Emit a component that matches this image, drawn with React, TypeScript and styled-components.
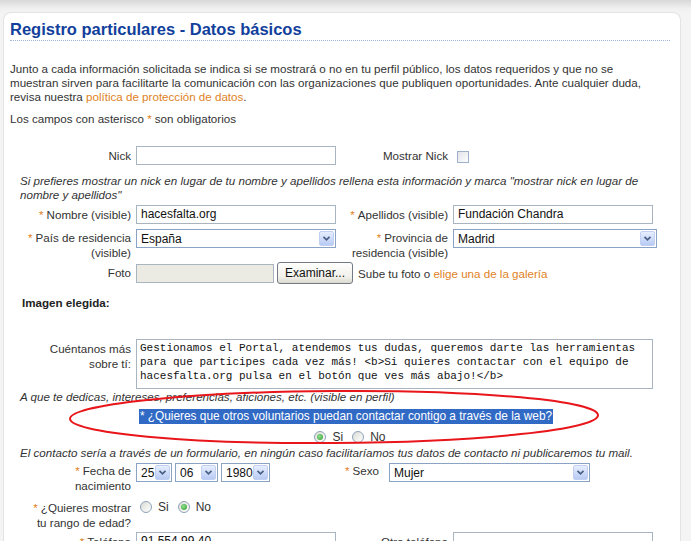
import React from "react";
import styled, { createGlobalStyle } from "styled-components";

const GlobalStyle = createGlobalStyle`
  html, body { margin: 0; padding: 0; }
  body {
    background: #f3f3f3;
    font-family: "Liberation Sans", Arial, sans-serif;
    font-size: 11.6px;
    color: #333;
  }
`;

const Page = styled.div`
  position: relative;
  width: 691px;
  height: 541px;
  overflow: hidden;
  box-sizing: border-box;
  padding: 12px 10px 0 3px;
  background: linear-gradient(#d8d8d8, #f1f1f1 9px, #f4f4f4 14px);
`;

const Card = styled.div`
  height: 100%;
  box-sizing: border-box;
  background: #fff;
  border: 1px solid #e3e3e3;
  border-bottom: none;
  border-radius: 8px 8px 0 0;
  padding: 6px 7px 0 6px;
`;

const Title = styled.h1`
  margin: 0 3px 0 0;
  font-size: 16.5px;
  line-height: 20px;
  font-weight: bold;
  color: #123f9c;
  padding-bottom: 1px;
  border-bottom: 1px dotted #9db5df;
`;

const Text = styled.p<{ $top: number; $indent?: number; $italic?: boolean }>`
  margin: ${(p) => p.$top}px 0 0 0;
  padding-left: ${(p) => p.$indent ?? 0}px;
  line-height: 14px;
  white-space: nowrap;
  font-style: ${(p) => (p.$italic ? "italic" : "normal")};
`;

const Link = styled.span`
  color: #e0821e;
`;

const Star = styled.span`
  color: #e0821e;
  margin-right: 3px;
`;

const Row = styled.div<{ $top: number }>`
  display: grid;
  grid-template-columns: 126px 200px 117px 200px;
  align-items: start;
  margin-top: ${(p) => p.$top}px;
`;

const DateRow = styled(Row)`
  grid-template-columns: 126px 200px 53px 201px;
`;

const Label = styled.div<{ $pad?: number }>`
  text-align: right;
  padding-right: 5px;
  padding-top: ${(p) => p.$pad ?? 2}px;
  line-height: 15px;
  color: #333;
`;

const SideLabel = styled.div`
  padding-left: 9px;
  line-height: 15px;
  white-space: nowrap;
`;

const Input = styled.div<{ $w?: number; $disabled?: boolean }>`
  width: ${(p) => p.$w ?? 200}px;
  height: 19px;
  box-sizing: border-box;
  border: 1px solid #a9b4c1;
  background: ${(p) => (p.$disabled ? "#ebebe4" : "#fff")};
  padding: 0 4px;
  font-size: 12px;
  line-height: 17px;
  color: #111;
`;

const Select = styled.div<{ $w: number }>`
  width: ${(p) => p.$w}px;
  height: 19px;
  box-sizing: border-box;
  border: 1px solid #8aa3c4;
  background: #fff;
  display: flex;
  align-items: center;
  padding-left: 4px;
  font-size: 12px;
  color: #111;
`;

const SelectValue = styled.span`
  flex: 1;
`;

const ArrowBtn = styled.span`
  width: 15px;
  height: 15px;
  margin-right: 1px;
  box-sizing: border-box;
  border: 1px solid #c1d0f2;
  border-radius: 2px;
  background: linear-gradient(#e6eefe, #b9cbf5);
  display: flex;
  align-items: center;
  justify-content: center;
`;

const Checkbox = styled.span`
  display: inline-block;
  width: 12px;
  height: 12px;
  box-sizing: border-box;
  margin: 5px 0 0 4px;
  border: 1px solid #9eb0c9;
  background: linear-gradient(135deg, #e2e4ea, #fdfdfd);
`;

const RadioDot = styled.span<{ $on?: boolean }>`
  display: inline-block;
  position: relative;
  width: 12px;
  height: 12px;
  box-sizing: border-box;
  border-radius: 50%;
  border: 1px solid #8da2b9;
  background: linear-gradient(135deg, #dcdcd5, #ffffff);
  &::after {
    content: "";
    display: ${(p) => (p.$on ? "block" : "none")};
    position: absolute;
    left: 2px;
    top: 2px;
    width: 6px;
    height: 6px;
    border-radius: 50%;
    background: radial-gradient(circle at 40% 40%, #8fe08f, #2c9a2c);
  }
`;

const RadioGroup = styled.div<{ $center?: boolean; $top?: number }>`
  display: flex;
  align-items: center;
  gap: 6px;
  justify-content: ${(p) => (p.$center ? "center" : "flex-start")};
  margin-top: ${(p) => p.$top ?? 0}px;
  padding: ${(p) => (p.$center ? "0 0 0 20px" : "0 0 0 4px")};
  line-height: 14px;
  font-size: 12px;
`;

const RadioText = styled.span`
  margin-right: 3px;
`;

const FileRow = styled.div`
  grid-column: 2 / 5;
  display: flex;
  align-items: center;
  gap: 3px;
`;

const Button = styled.span`
  width: 76px;
  height: 22px;
  margin-top: -1px;
  box-sizing: border-box;
  border: 1px solid #707b86;
  border-radius: 3px;
  background: linear-gradient(#ffffff, #f1f0ea 70%, #dcdad0);
  display: flex;
  align-items: center;
  justify-content: center;
  font-size: 12px;
  color: #111;
`;

const FileHint = styled.span`
  margin-left: 2px;
  white-space: nowrap;
`;

const Subhead = styled.div`
  margin-top: 12px;
  padding-left: 12px;
  font-weight: bold;
  line-height: 14px;
  color: #222;
`;

const TextArea = styled.div`
  grid-column: 2 / 5;
  width: 517px;
  height: 50px;
  box-sizing: border-box;
  border: 1px solid #a9b4c1;
  padding: 1px 3px;
  font-family: "Liberation Mono", "Courier New", monospace;
  font-size: 11px;
  line-height: 14px;
  color: #111;
  white-space: pre;
`;

const HighlightRow = styled.div`
  margin-top: 5px;
  display: flex;
  justify-content: center;
  padding-left: 9px;
  line-height: 15px;
  font-size: 11.85px;
`;

const Highlight = styled.span`
  background: #316ac5;
  color: #fff;
  padding: 0 1px;
`;

const DateGroup = styled.div`
  display: flex;
  gap: 3px;
`;

const Ring = styled.svg`
  position: absolute;
  left: 0;
  top: 0;
  pointer-events: none;
`;

const Chevron = () => (
  <svg width="9" height="7" viewBox="0 0 9 7">
    <path d="M1.5 1.8 L4.5 4.8 L7.5 1.8" fill="none" stroke="#4a5f86" strokeWidth="1.7" />
  </svg>
);

const Drop: React.FC<{ w: number; value: string }> = ({ w, value }) => (
  <Select $w={w}>
    <SelectValue>{value}</SelectValue>
    <ArrowBtn>
      <Chevron />
    </ArrowBtn>
  </Select>
);

export default function App() {
  return (
    <Page>
      <GlobalStyle />
      <Card>
        <Title>Registro particulares - Datos básicos</Title>
        <Text $top={21}>
          Junto a cada información solicitada se indica si se mostrará o no en tu perfil público, los datos requeridos y que no se
          <br />
          muestran sirven para facilitarte la comunicación con las organizaciones que publiquen oportunidades. Ante cualquier duda,
          <br />
          revisa nuestra <Link>política de protección de datos</Link>.
        </Text>
        <Text $top={8}>
          Los campos con asterisco <Star>*</Star>son obligatorios
        </Text>

        <Row $top={20}>
          <Label>Nick</Label>
          <Input />
          <Label>Mostrar Nick</Label>
          <div>
            <Checkbox />
          </div>
        </Row>
        <Text $top={9} $indent={10} $italic>
          Si prefieres mostrar un nick en lugar de tu nombre y apellidos rellena esta información y marca "mostrar nick en lugar de
          <br />
          nombre y apellidos"
        </Text>

        <Row $top={3}>
          <Label><Star>*</Star>Nombre (visible)</Label>
          <Input>hacesfalta.org</Input>
          <Label><Star>*</Star>Apellidos (visible)</Label>
          <Input>Fundación Chandra</Input>
        </Row>

        <Row $top={5}>
          <Label $pad={1}><Star>*</Star>País de residencia<br />(visible)</Label>
          <Drop w={200} value="España" />
          <Label $pad={1}><Star>*</Star>Provincia de<br />residencia (visible)</Label>
          <Drop w={204} value="Madrid" />
        </Row>

        <Row $top={3}>
          <Label>Foto</Label>
          <FileRow>
            <Input $w={138} $disabled />
            <Button>Examinar...</Button>
            <FileHint>
              Sube tu foto o <Link>elige una de la galería</Link>
            </FileHint>
          </FileRow>
        </Row>

        <Subhead>Imagen elegida:</Subhead>

        <Row $top={29}>
          <Label>Cuéntanos más<br />sobre tí:</Label>
          <TextArea>
            {"Gestionamos el Portal, atendemos tus dudas, queremos darte las herramientas\npara que participes cada vez más! <b>Si quieres contactar con el equipo de\nhacesfalta.org pulsa en el botón que ves más abajo!</b>"}
          </TextArea>
        </Row>
        <Text $top={1} $indent={10} $italic>
          A que te dedicas, intereses, preferencias, aficiones, etc. (visible en perfil)
        </Text>

        <HighlightRow>
          <Highlight>* ¿Quieres que otros voluntarios puedan contactar contigo a través de la web?</Highlight>
        </HighlightRow>
        <RadioGroup $center $top={6}>
          <RadioDot $on />
          <RadioText>Si</RadioText>
          <RadioDot />
          <RadioText>No</RadioText>
        </RadioGroup>
        <Text $top={2} $indent={10} $italic>
          El contacto sería a través de un formulario, en ningún caso facilitaríamos tus datos de contacto ni publicaremos tu mail.
        </Text>

        <DateRow $top={3}>
          <Label $pad={0}><Star>*</Star>Fecha de<br />nacimiento</Label>
          <DateGroup>
            <Drop w={36} value="25" />
            <Drop w={43} value="06" />
            <Drop w={49} value="1980" />
          </DateGroup>
          <SideLabel><Star>*</Star>Sexo</SideLabel>
          <Drop w={201} value="Mujer" />
        </DateRow>

        <Row $top={7}>
          <Label $pad={0}><Star>*</Star>¿Quieres mostrar<br />tu rango de edad?</Label>
          <RadioGroup>
            <RadioDot />
            <RadioText>Si</RadioText>
            <RadioDot $on />
            <RadioText>No</RadioText>
          </RadioGroup>
        </Row>

        <Row $top={2}>
          <Label><Star>*</Star>Teléfono</Label>
          <Input>91 554 99 40</Input>
          <Label>Otro teléfono</Label>
          <Input />
        </Row>
      </Card>
      <Ring width="691" height="541" viewBox="0 0 691 541">
        <ellipse cx="334" cy="417" rx="264" ry="26" fill="none" stroke="#e8161b" strokeWidth="2" transform="rotate(-0.4 334 417)" />
      </Ring>
    </Page>
  );
}
